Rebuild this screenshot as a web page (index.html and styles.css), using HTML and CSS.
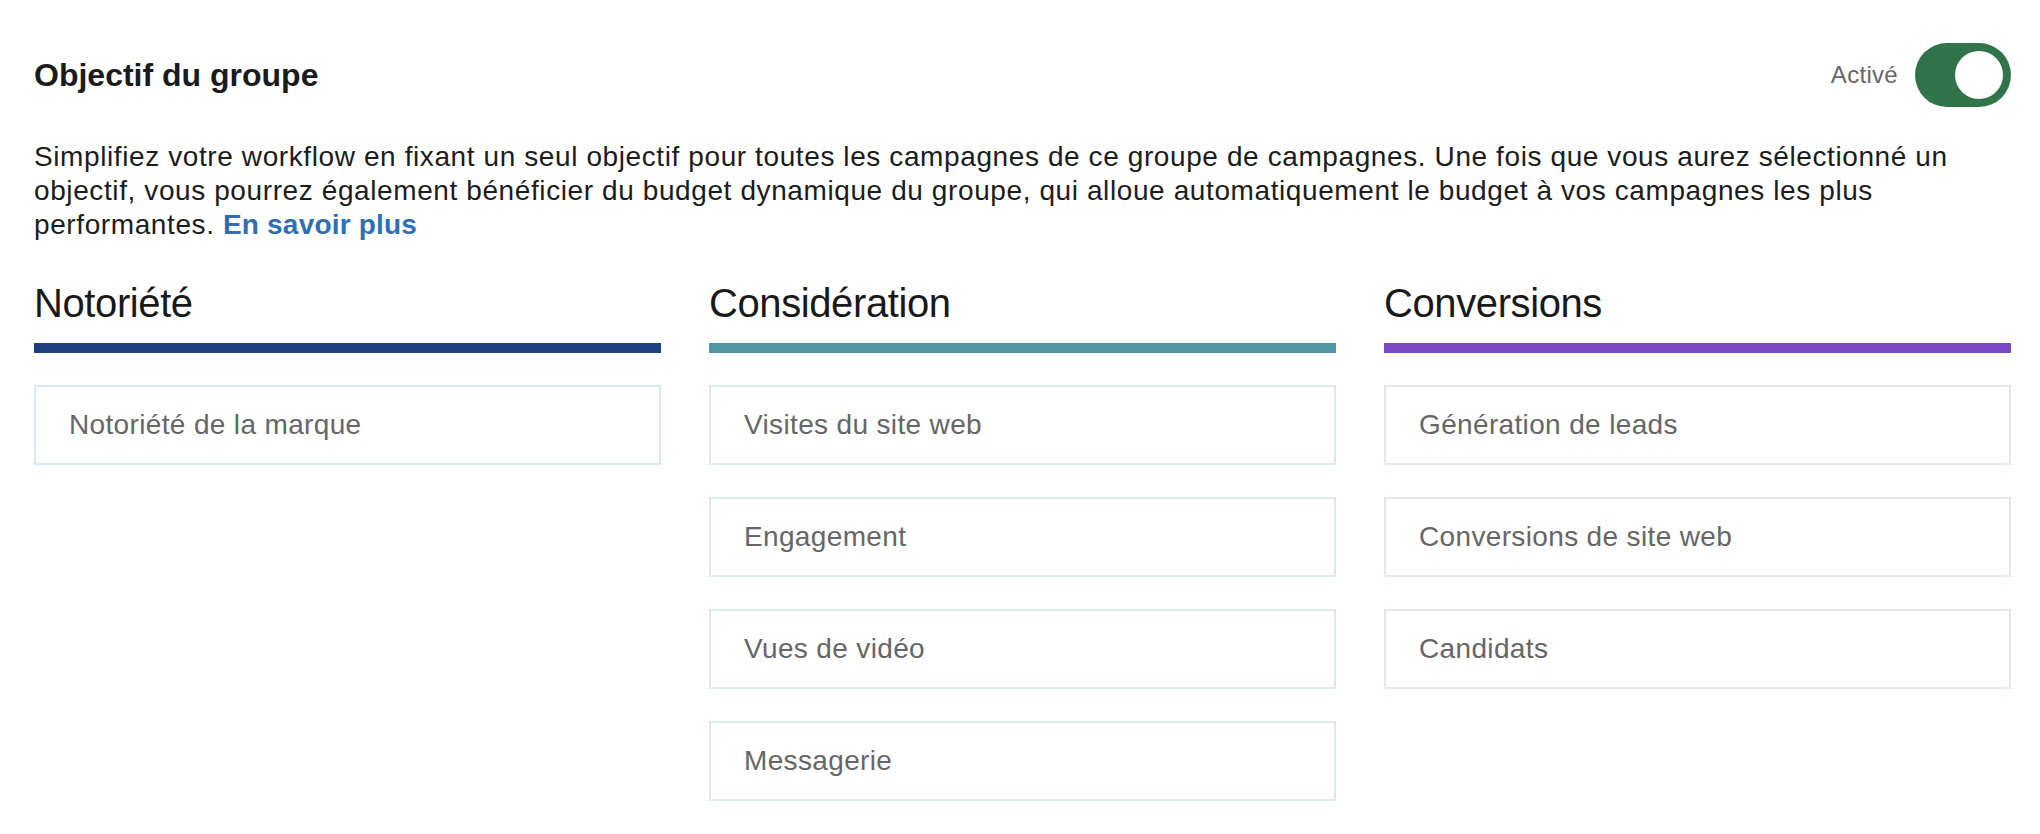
FILE: index.html
```html
<!DOCTYPE html>
<html lang="fr">
<head>
  <meta charset="UTF-8" />
  <meta name="viewport" content="width=device-width, initial-scale=1.0"/>
  <title>Objectif du groupe</title>
  <link rel="stylesheet" href="styles.css">
</head>
<body>
  <section class="panel">
    <div class="panel-header">
      <h2>Objectif du groupe</h2>
      <div class="toggle-wrap">
        <span class="toggle-label">Activé</span>
        <span class="switch on" role="switch" aria-checked="true"><span class="knob"></span></span>
      </div>
    </div>

    <p class="intro">
      Simplifiez votre workflow en fixant un seul objectif pour toutes les campagnes de ce groupe de campagnes. Une fois que vous aurez sélectionné un objectif, vous pourrez également bénéficier du budget dynamique du groupe, qui alloue automatiquement le budget à vos campagnes les plus performantes. <a href="#">En savoir plus</a>
    </p>

    <div class="objectives">
      <div class="col awareness">
        <h3>Notoriété</h3>
        <div class="bar"></div>
        <ul class="options">
          <li class="option">Notoriété de la marque</li>
        </ul>
      </div>

      <div class="col consideration">
        <h3>Considération</h3>
        <div class="bar"></div>
        <ul class="options">
          <li class="option">Visites du site web</li>
          <li class="option">Engagement</li>
          <li class="option">Vues de vidéo</li>
          <li class="option">Messagerie</li>
        </ul>
      </div>

      <div class="col conversions">
        <h3>Conversions</h3>
        <div class="bar"></div>
        <ul class="options">
          <li class="option">Génération de leads</li>
          <li class="option">Conversions de site web</li>
          <li class="option">Candidats</li>
        </ul>
      </div>
    </div>
  </section>
</body>
</html>
```

FILE: styles.css
```css
body {
  margin: 0;
  font-family: "Liberation Sans", Arial, sans-serif;
  background-color: #ffffff;
  color: #1c1c1c;
}

.panel {
  width: 1977px;
  margin-left: 34px;
  padding-top: 43px;
}

.panel-header {
  display: flex;
  justify-content: space-between;
  align-items: center;
  height: 64px;
}

.panel-header h2 {
  margin: 0;
  font-size: 32px;
  font-weight: bold;
  color: #1b1b1b;
}

.toggle-wrap {
  display: flex;
  align-items: center;
  gap: 17px;
}

.toggle-label {
  font-size: 24px;
  letter-spacing: 0.3px;
  color: #666666;
}

.switch {
  display: flex;
  justify-content: flex-end;
  align-items: center;
  box-sizing: border-box;
  width: 96px;
  height: 64px;
  padding: 8px;
  border-radius: 32px;
  background-color: #31744a;
}

.knob {
  width: 48px;
  height: 48px;
  border-radius: 50%;
  background-color: #ffffff;
}

.intro {
  margin: 33px 0 0;
  font-size: 28px;
  line-height: 34px;
  letter-spacing: 0.6px;
}

.intro a {
  color: #2f6fb4;
  font-weight: bold;
  letter-spacing: 0.2px;
  text-decoration: none;
}

.objectives {
  display: grid;
  grid-template-columns: repeat(3, 627px);
  gap: 48px;
  margin-top: 37px;
}

.col h3 {
  margin: 0;
  font-size: 40px;
  line-height: 48px;
  font-weight: normal;
  letter-spacing: -0.4px;
  color: #191919;
}

.bar {
  height: 10px;
  margin-top: 16px;
}

.options {
  display: flex;
  flex-direction: column;
  gap: 32px;
  margin: 32px 0 0;
  padding: 0;
  list-style: none;
}

.option {
  display: flex;
  align-items: center;
  box-sizing: border-box;
  height: 80px;
  padding: 0 33px;
  border: 2px solid #dce8eb;
  font-size: 28px;
  letter-spacing: 0.35px;
  color: #666666;
}

.awareness .bar { background-color: #1c4080; }
.awareness .option { border-color: #d6e8fa; }

.consideration .bar { background-color: #5096a3; }
.consideration .option { border-color: #dde9ec; }

.conversions .bar { background-color: #7a48c2; }
.conversions .option { border-color: #ebe4f6; }
```
